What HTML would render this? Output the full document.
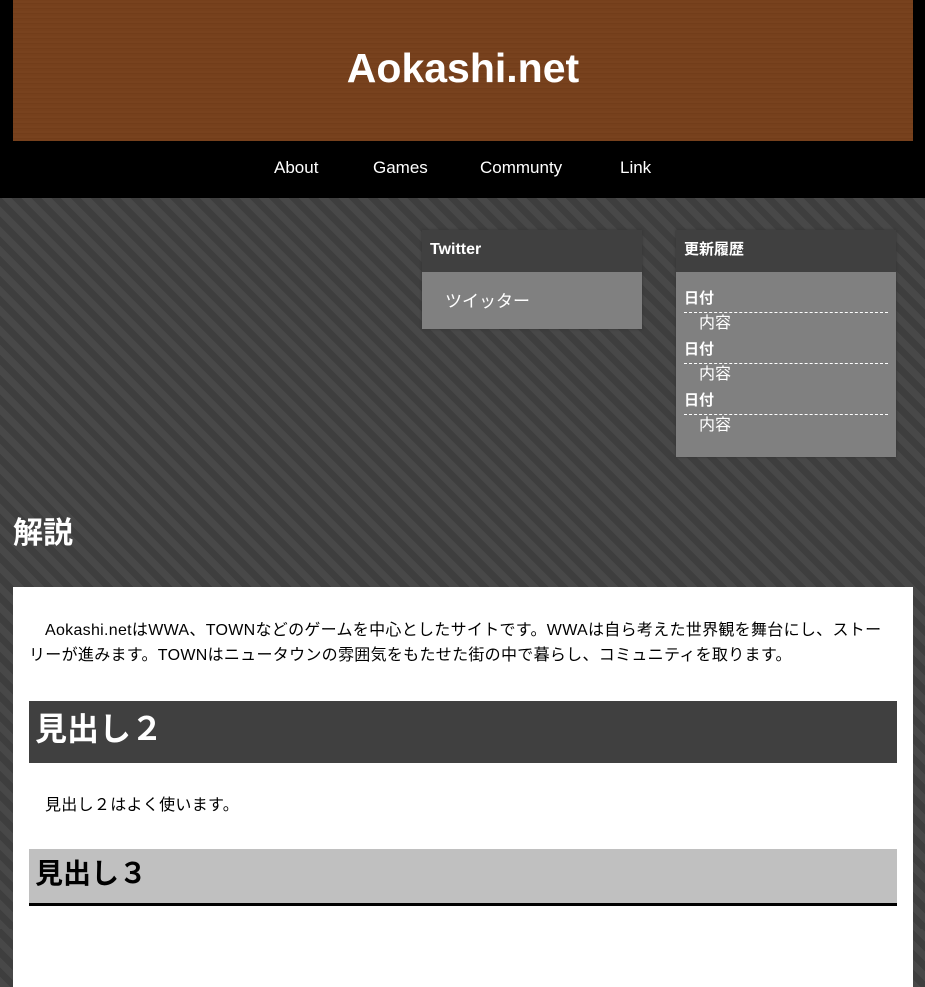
<!DOCTYPE html>
<html><head><meta charset="utf-8"><style>
*{margin:0;padding:0;box-sizing:border-box}
body{width:925px;height:929px;overflow:hidden;font-family:"Liberation Sans","Noto Sans CJK JP",sans-serif;background:repeating-linear-gradient(45deg,#484848 0 7px,#3e3e3e 7px 14px);position:relative}
.hd{position:absolute;left:0;top:0;width:925px;height:198px;background:#000}
.wood{position:absolute;left:13px;top:0;width:900px;height:141px;background:repeating-linear-gradient(0deg,#76401c 0 2px,#723d1a 2px 3px,#78421e 3px 5px);color:#fff;font-weight:bold;font-size:41px;text-align:center;line-height:136px}
.nav{position:absolute;top:158px;font-size:17px;color:#fff}
.box{position:absolute;width:220px;background:#808080;color:#fff;box-shadow:0 0 2px #333}
.box .t{background:#404040;height:42px;line-height:40px;padding-left:8px;font-weight:bold;font-size:16px}
.dt{font-weight:bold;font-size:15px;margin:0 8px;border-bottom:1px dashed #fff;height:26px;line-height:24px}
.dd{font-size:16px;padding-left:23px;height:25px;line-height:22px}
h1{position:absolute;left:13px;top:508px;font-size:30px;color:#fff}
.main{position:absolute;left:13px;top:587px;width:900px;height:400px;background:#fff;padding:0 16px}
p{font-size:16px;line-height:25px;text-indent:16px;letter-spacing:0.3px}
h2{background:#404040;color:#fff;font-size:32px;height:62px;line-height:56px;padding-left:6px}
h3{background:#c0c0c0;color:#000;font-size:28px;height:57px;line-height:50px;padding-left:6px;border-bottom:3px solid #000}
</style></head><body>
<div class="hd"><div class="wood">Aokashi.net</div>
<span class="nav" style="left:274px">About</span><span class="nav" style="left:373px">Games</span><span class="nav" style="left:480px">Communty</span><span class="nav" style="left:620px">Link</span></div>
<div class="box" style="left:422px;top:230px;height:99px"><div class="t">Twitter</div><div style="padding:15px 23px;font-size:17px">ツイッター</div></div>
<div class="box" style="left:676px;top:230px;height:227px"><div class="t" style="font-size:15px">更新履歴</div>
<div style="padding-top:15px"><div class="dt">日付</div><div class="dd">内容</div><div class="dt">日付</div><div class="dd">内容</div><div class="dt">日付</div><div class="dd">内容</div></div></div>
<h1>解説</h1>
<div class="main">
<p style="padding-top:31px">Aokashi.netはWWA、TOWNなどのゲームを中心としたサイトです。WWAは自ら考えた世界観を舞台にし、ストーリーが進みます。TOWNはニュータウンの雰囲気をもたせた街の中で暮らし、コミュニティを取ります。</p>
<h2 style="margin-top:33px">見出し２</h2>
<p style="margin-top:30px">見出し２はよく使います。</p>
<h3 style="margin-top:31px">見出し３</h3>
</div>
</body></html>
